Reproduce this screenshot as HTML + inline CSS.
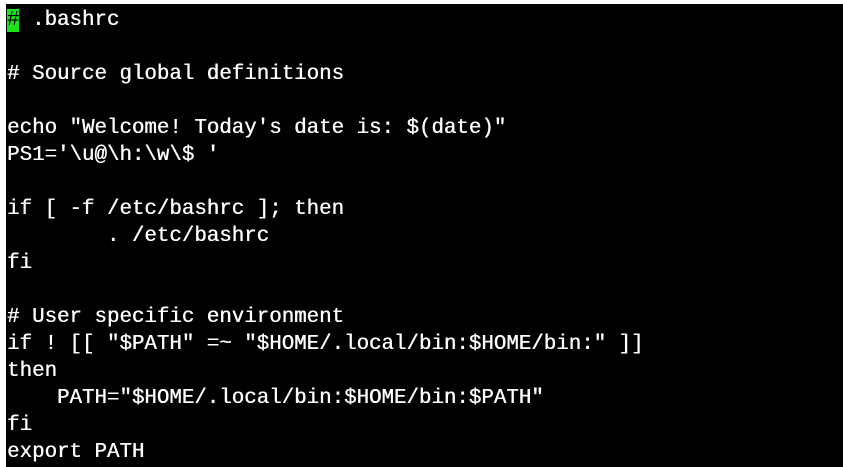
<!DOCTYPE html><html><head><style>
html,body{margin:0;padding:0;background:#fff;width:843px;height:467px;overflow:hidden}
#t{position:absolute;left:6px;top:4px;width:837px;height:463px;background:#000}
pre{margin:0;position:absolute;left:1px;top:3px;font-family:"Liberation Mono",monospace;font-size:20.8px;line-height:27px;color:#fff;text-shadow:0.4px 0 0 #fff}
.c{background:#1ee01e;color:#000;text-shadow:none}
</style></head><body><div id="t"><pre><span class="c">#</span> .bashrc

# Source global definitions

echo "Welcome! Today's date is: $(date)"
PS1='\u@\h:\w\$ '

if [ -f /etc/bashrc ]; then
        . /etc/bashrc
fi

# User specific environment
if ! [[ "$PATH" =~ "$HOME/.local/bin:$HOME/bin:" ]]
then
    PATH="$HOME/.local/bin:$HOME/bin:$PATH"
fi
export PATH</pre></div></body></html>
